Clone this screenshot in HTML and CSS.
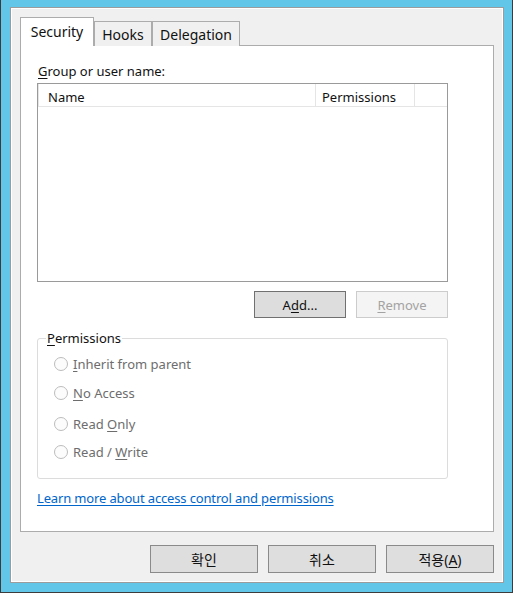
FILE: index.html
```html
<!DOCTYPE html>
<html>
<head>
<meta charset="utf-8">
<link rel="stylesheet" href="styles.css">
</head>
<body>
<div class="frame">
  <div class="dialog">
    <div class="tabs">
      <div class="tab tab-active tab-security">Security</div>
      <div class="tab tab-hooks">Hooks</div>
      <div class="tab tab-delegation">Delegation</div>
    </div>
    <div class="panel">
      <div class="label"><u>G</u>roup or user name:</div>
      <div class="list">
        <div class="list-head">
          <div class="col col-name">Name</div>
          <div class="col col-perm">Permissions</div>
          <div class="col col-rest"></div>
        </div>
      </div>
      <div class="list-buttons">
        <div class="btn btn-default">A<u>d</u>d...</div>
        <div class="btn btn-disabled"><u>R</u>emove</div>
      </div>
      <fieldset class="group">
        <legend class="group-legend"><u>P</u>ermissions</legend>
        <div class="radio radio-1"><span class="circle"></span><span class="radio-label"><u>I</u>nherit from parent</span></div>
        <div class="radio radio-2"><span class="circle"></span><span class="radio-label"><u>N</u>o Access</span></div>
        <div class="radio radio-3"><span class="circle"></span><span class="radio-label">Read <u>O</u>nly</span></div>
        <div class="radio radio-4"><span class="circle"></span><span class="radio-label">Read / <u>W</u>rite</span></div>
      </fieldset>
      <a class="link" href="#">Learn more about access control and permissions</a>
    </div>
    <div class="dialog-buttons">
      <div class="btn btn-bottom">확인</div>
      <div class="btn btn-bottom">취소</div>
      <div class="btn btn-bottom">적용(<u>A</u>)</div>
    </div>
  </div>
</div>
</body>
</html>
```
FILE: styles.css
```css
* { box-sizing: border-box; }
html, body { margin: 0; padding: 0; }
body {
  font-family: "Noto Sans", "Noto Sans CJK KR", sans-serif;
  font-size: 13px;
  color: #111111;
  background: #62c6e8;
}
u { text-decoration: underline; text-underline-offset: 2px; text-decoration-thickness: 1px; }

.frame {
  width: 513px;
  height: 593px;
  background: #62c6e8;
  border-left: 1px solid #3c3c3c;
  border-right: 1px solid #3c3c3c;
  border-bottom: 1px solid #3c3c3c;
  padding: 7px 8px 9px 9px;
}
.dialog {
  width: 494px;
  height: 576px;
  background: #f0f0f0;
  border: 1px solid #9c9c9c;
  box-shadow: inset 1px 1px 0 #ffffff, inset -1px -1px 0 #ffffff;
  display: flex;
  flex-direction: column;
  padding: 10px 9px 9px 9px;
}

.tabs {
  display: flex;
  align-items: flex-end;
  height: 28px;
  margin-bottom: -1px;
  position: relative;
  z-index: 1;
}
.tab {
  height: 25px;
  border: 1px solid #acacac;
  border-bottom: none;
  background: #f0f0f0;
  display: flex;
  align-items: center;
  justify-content: center;
  font-size: 14px;
}
.tab-active {
  height: 29px;
  background: #ffffff;
  padding-bottom: 2px;
}
.tab-security { width: 74px; }
.tab-hooks { width: 58px; }
.tab-delegation { width: 88px; }

.panel {
  flex: 1;
  background: #ffffff;
  border: 1px solid #acacac;
  display: flex;
  flex-direction: column;
  padding: 16px 45px 0 16px;
}
.label {
  height: 18px;
  line-height: 18px;
  padding-left: 1px;
}
.list {
  margin-top: 3px;
  height: 199px;
  border: 1px solid #9a9a9a;
  background: #ffffff;
}
.list-head {
  display: flex;
  height: 23px;
  border-bottom: 1px solid #e5e5e5;
}
.col {
  height: 22px;
  line-height: 22px;
  padding-top: 2px;
  border-right: 1px solid #e5e5e5;
}
.col-name { width: 278px; padding-left: 9px; border-left: 1px solid #e5e5e5; }
.col-perm { width: 99px; padding-left: 6px; }
.col-rest { width: 31px; border-right: none; }

.list-buttons {
  display: flex;
  justify-content: flex-end;
  gap: 10px;
  margin-top: 9px;
}
.btn {
  height: 27px;
  display: flex;
  align-items: center;
  justify-content: center;
  background: #e1e1e1;
  border: 1px solid #adadad;
}
.btn-default { width: 92px; border-color: #707070; background: #dddddd; }
.btn-disabled { width: 92px; background: #f4f4f4; border-color: #cccccc; color: #a3a3a3; }

.group {
  margin: 12px 0 0 0;
  height: 149px;
  border: 1px solid #dcdcdc;
  border-radius: 3px;
  padding: 0;
  min-width: 0;
}
.group-legend {
  padding: 0 1px;
  margin-left: 8px;
  line-height: 16px;
  color: #111111;
}
.radio {
  display: flex;
  align-items: center;
  height: 18px;
  margin-left: 16px;
  color: #6d6d6d;
}
.radio-1 { margin-top: 9px; }
.radio-2 { margin-top: 11px; }
.radio-3 { margin-top: 13px; }
.radio-4 { margin-top: 10px; }
.circle {
  width: 14px;
  height: 14px;
  border-radius: 50%;
  border: 1px solid #bcbcbc;
  background: #fcfcfc;
  margin-right: 5px;
  flex: none;
}
.link {
  margin-top: 10px;
  color: #0066cc;
  text-decoration: underline;
  text-underline-offset: 2px;
  line-height: 18px;
  letter-spacing: -0.15px;
  align-self: flex-start;
}

.dialog-buttons {
  display: flex;
  justify-content: flex-end;
  gap: 10px;
  margin-top: 13px;
}
.btn-bottom {
  width: 108px;
  height: 28px;
  border-color: #8a8a8a;
  background: #dedede;
  font-size: 14px;
}
```
